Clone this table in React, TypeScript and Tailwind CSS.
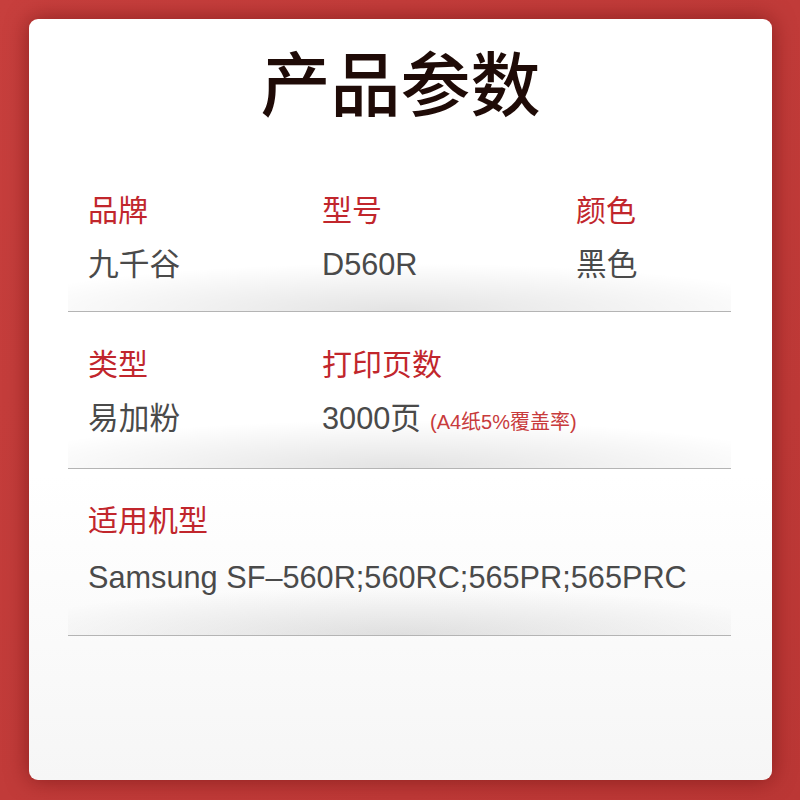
const font = "font-['Liberation_Sans','Noto_Sans_CJK_SC',sans-serif]";

const shade =
  "border-b border-[#b4b4b4] bg-[radial-gradient(ellipse_62%_48px_at_50%_100%,rgba(0,0,0,0.11),rgba(0,0,0,0)_100%)] bg-no-repeat";

function Label({ children }: { children: React.ReactNode }) {
  return <div className="text-[30px] leading-[40px] text-[#c1262c]">{children}</div>;
}

function Value({ children }: { children: React.ReactNode }) {
  return <div className="h-[40px] text-[30.7px] leading-[40px] text-[#4a4a4a] whitespace-nowrap">{children}</div>;
}

function Cell({ label, value, gap = "mt-[14px]" }: { label: string; value: React.ReactNode; gap?: string }) {
  return (
    <div className="flex flex-col">
      <Label>{label}</Label>
      <div className={gap}>
        <Value>{value}</Value>
      </div>
    </div>
  );
}

export default function App() {
  return (
    <div className={`w-[800px] h-[800px] bg-[linear-gradient(135deg,#c73f3d,#bb3735)] pt-[19px] pl-[29px] ${font}`}>
      <div className="w-[743px] h-[761px] rounded-[9px] bg-[linear-gradient(180deg,#ffffff_60%,#f6f6f6)] shadow-[0_0_22px_rgba(90,10,10,0.55)] pt-[28px] flex flex-col">
        <h1 className="h-[80px] leading-[80px] text-center text-[70px] font-medium text-[#1f0b07]">
          产品参数
        </h1>

        <div className="ml-[39px] mr-[41px] flex flex-col">
          <div className={`pt-[64px] pb-[26px] pl-[20px] ${shade}`}>
            <div className="grid grid-cols-[234px_254px_1fr]">
              <Cell label="品牌" value="九千谷" />
              <Cell label="型号" value="D560R" />
              <Cell label="颜色" value="黑色" />
            </div>
          </div>

          <div className={`pt-[33px] pb-[29px] pl-[20px] ${shade}`}>
            <div className="grid grid-cols-[234px_1fr]">
              <Cell label="类型" value="易加粉" />
              <Cell
                label="打印页数"
                value={
                  <>
                    3000页
                    <span className="ml-[9px] text-[20px] leading-none text-[#c83b3c]">(A4纸5%覆盖率)</span>
                  </>
                }
              />
            </div>
          </div>

          <div className={`pt-[32px] pb-[37px] pl-[20px] ${shade}`}>
            <Cell label="适用机型" value="Samsung SF–560R;560RC;565PR;565PRC" gap="mt-[17px]" />
          </div>
        </div>
      </div>
    </div>
  );
}
